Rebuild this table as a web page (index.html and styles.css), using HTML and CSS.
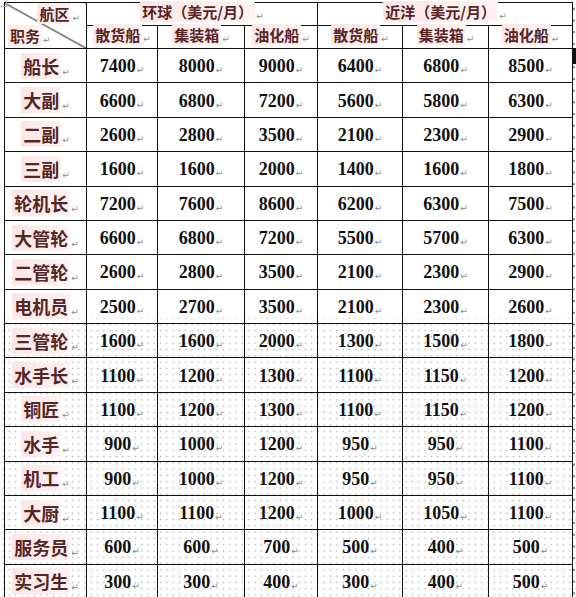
FILE: index.html
```html
<!DOCTYPE html>
<html lang="zh">
<head>
<meta charset="utf-8">
<link rel="stylesheet" href="styles.css">
</head>
<body>
<div class="page">
  <span class="crop"></span>
  <span class="cellmark"></span>
  <table class="wage">
    <colgroup>
      <col class="c0"><col class="c1"><col class="c2"><col class="c3"><col class="c4"><col class="c5"><col class="c6">
    </colgroup>
    <thead>
      <tr class="h1">
        <th rowspan="2" class="corner">
          <div class="corner-in">
            <span class="zone"><span class="hl">航区</span><span class="pm">↵</span></span>
            <span class="duty"><span class="hl">职务</span><span class="pm">↵</span></span>
          </div>
        </th>
        <th colspan="3" class="grp"><span class="hl">环球（美元/月）</span><span class="pm">↵</span></th>
        <th colspan="3" class="grp"><span class="hl">近洋（美元/月）</span><span class="pm">↵</span></th>
      </tr>
      <tr class="h2">
        <th><span class="hl">散货船</span><span class="pm">↵</span></th>
        <th><span class="hl">集装箱</span><span class="pm">↵</span></th>
        <th><span class="hl">油化船</span><span class="pm">↵</span></th>
        <th><span class="hl">散货船</span><span class="pm">↵</span></th>
        <th><span class="hl">集装箱</span><span class="pm">↵</span></th>
        <th><span class="hl">油化船</span><span class="pm">↵</span></th>
      </tr>
    </thead>
    <tbody>
      <tr><td class="name"><span class="hl">船长</span><span class="pm">↵</span></td><td>7400<span class="pm">↵</span></td><td>8000<span class="pm">↵</span></td><td>9000<span class="pm">↵</span></td><td>6400<span class="pm">↵</span></td><td>6800<span class="pm">↵</span></td><td>8500<span class="pm">↵</span></td></tr>
      <tr><td class="name"><span class="hl">大副</span><span class="pm">↵</span></td><td>6600<span class="pm">↵</span></td><td>6800<span class="pm">↵</span></td><td>7200<span class="pm">↵</span></td><td>5600<span class="pm">↵</span></td><td>5800<span class="pm">↵</span></td><td>6300<span class="pm">↵</span></td></tr>
      <tr><td class="name"><span class="hl">二副</span><span class="pm">↵</span></td><td>2600<span class="pm">↵</span></td><td>2800<span class="pm">↵</span></td><td>3500<span class="pm">↵</span></td><td>2100<span class="pm">↵</span></td><td>2300<span class="pm">↵</span></td><td>2900<span class="pm">↵</span></td></tr>
      <tr><td class="name"><span class="hl">三副</span><span class="pm">↵</span></td><td>1600<span class="pm">↵</span></td><td>1600<span class="pm">↵</span></td><td>2000<span class="pm">↵</span></td><td>1400<span class="pm">↵</span></td><td>1600<span class="pm">↵</span></td><td>1800<span class="pm">↵</span></td></tr>
      <tr><td class="name"><span class="hl">轮机长</span><span class="pm">↵</span></td><td>7200<span class="pm">↵</span></td><td>7600<span class="pm">↵</span></td><td>8600<span class="pm">↵</span></td><td>6200<span class="pm">↵</span></td><td>6300<span class="pm">↵</span></td><td>7500<span class="pm">↵</span></td></tr>
      <tr><td class="name"><span class="hl">大管轮</span><span class="pm">↵</span></td><td>6600<span class="pm">↵</span></td><td>6800<span class="pm">↵</span></td><td>7200<span class="pm">↵</span></td><td>5500<span class="pm">↵</span></td><td>5700<span class="pm">↵</span></td><td>6300<span class="pm">↵</span></td></tr>
      <tr><td class="name"><span class="hl">二管轮</span><span class="pm">↵</span></td><td>2600<span class="pm">↵</span></td><td>2800<span class="pm">↵</span></td><td>3500<span class="pm">↵</span></td><td>2100<span class="pm">↵</span></td><td>2300<span class="pm">↵</span></td><td>2900<span class="pm">↵</span></td></tr>
      <tr><td class="name"><span class="hl">电机员</span><span class="pm">↵</span></td><td>2500<span class="pm">↵</span></td><td>2700<span class="pm">↵</span></td><td>3500<span class="pm">↵</span></td><td>2100<span class="pm">↵</span></td><td>2300<span class="pm">↵</span></td><td>2600<span class="pm">↵</span></td></tr>
      <tr><td class="name"><span class="hl">三管轮</span><span class="pm">↵</span></td><td>1600<span class="pm">↵</span></td><td>1600<span class="pm">↵</span></td><td>2000<span class="pm">↵</span></td><td>1300<span class="pm">↵</span></td><td>1500<span class="pm">↵</span></td><td>1800<span class="pm">↵</span></td></tr>
      <tr><td class="name"><span class="hl">水手长</span><span class="pm">↵</span></td><td>1100<span class="pm">↵</span></td><td>1200<span class="pm">↵</span></td><td>1300<span class="pm">↵</span></td><td>1100<span class="pm">↵</span></td><td>1150<span class="pm">↵</span></td><td>1200<span class="pm">↵</span></td></tr>
      <tr><td class="name"><span class="hl">铜匠</span><span class="pm">↵</span></td><td>1100<span class="pm">↵</span></td><td>1200<span class="pm">↵</span></td><td>1300<span class="pm">↵</span></td><td>1100<span class="pm">↵</span></td><td>1150<span class="pm">↵</span></td><td>1200<span class="pm">↵</span></td></tr>
      <tr><td class="name"><span class="hl">水手</span><span class="pm">↵</span></td><td>900<span class="pm">↵</span></td><td>1000<span class="pm">↵</span></td><td>1200<span class="pm">↵</span></td><td>950<span class="pm">↵</span></td><td>950<span class="pm">↵</span></td><td>1100<span class="pm">↵</span></td></tr>
      <tr><td class="name"><span class="hl">机工</span><span class="pm">↵</span></td><td>900<span class="pm">↵</span></td><td>1000<span class="pm">↵</span></td><td>1200<span class="pm">↵</span></td><td>950<span class="pm">↵</span></td><td>950<span class="pm">↵</span></td><td>1100<span class="pm">↵</span></td></tr>
      <tr><td class="name"><span class="hl">大厨</span><span class="pm">↵</span></td><td>1100<span class="pm">↵</span></td><td>1100<span class="pm">↵</span></td><td>1200<span class="pm">↵</span></td><td>1000<span class="pm">↵</span></td><td>1050<span class="pm">↵</span></td><td>1100<span class="pm">↵</span></td></tr>
      <tr><td class="name"><span class="hl">服务员</span><span class="pm">↵</span></td><td>600<span class="pm">↵</span></td><td>600<span class="pm">↵</span></td><td>700<span class="pm">↵</span></td><td>500<span class="pm">↵</span></td><td>400<span class="pm">↵</span></td><td>500<span class="pm">↵</span></td></tr>
      <tr><td class="name"><span class="hl">实习生</span><span class="pm">↵</span></td><td>300<span class="pm">↵</span></td><td>300<span class="pm">↵</span></td><td>400<span class="pm">↵</span></td><td>300<span class="pm">↵</span></td><td>400<span class="pm">↵</span></td><td>500<span class="pm">↵</span></td></tr>
    </tbody>
  </table>
</div>
</body>
</html>
```
FILE: styles.css
```css
html, body {
  margin: 0;
  padding: 0;
  background: #fff;
}
.page {
  position: relative;
  width: 576px;
  height: 597px;
  overflow: hidden;
  padding: 2px 0 0 4px;
  box-sizing: border-box;
  background:
    radial-gradient(circle, #8a8a8a 0.9px, transparent 1.3px) 572px 3px / 4px 11.7px repeat-y,
    linear-gradient(#fff, #fff) 0 0 / 100% 318px no-repeat,
    radial-gradient(circle, #a8a8a8 0.6px, transparent 1px) 0 0 / 6.3px 6.3px;
}
.crop {
  position: absolute;
  left: 0;
  top: 0;
  width: 6px;
  height: 6px;
  border-right: 1px solid #bbb;
  border-bottom: 1px solid #bbb;
}
.cellmark {
  position: absolute;
  left: 573px;
  top: 48px;
  width: 3px;
  height: 16px;
  background: #111;
}
.wage {
  border-collapse: collapse;
  table-layout: fixed;
  width: 568px;
  font-family: "Liberation Serif", "Noto Sans CJK SC", serif;
}
.c0 { width: 82px; }
.c1 { width: 71px; }
.c2 { width: 87px; }
.c3 { width: 73px; }
.c4 { width: 85px; }
.c5 { width: 86px; }
.c6 { width: 84px; }
.wage th, .wage td {
  border: 1px solid #111;
  padding: 0;
  text-align: center;
  vertical-align: middle;
  white-space: nowrap;
}
.wage th {
  font-family: "Noto Sans CJK SC", sans-serif;
  font-size: 15px;
  font-weight: 700;
  color: #5a2424;
  line-height: 18px;
}
.h1 th { height: 20px; }
.h2 th { height: 20px; }
.grp { text-align: center; }
.corner {
  background: linear-gradient(to top right, transparent calc(50% - 0.7px), #222 calc(50% - 0.3px), #222 calc(50% + 0.3px), transparent calc(50% + 0.7px));
}
.corner-in {
  display: flex;
  flex-direction: column;
  height: 41px;
  justify-content: space-between;
}
.zone {
  align-self: flex-end;
  padding-right: 6px;
}
.duty {
  align-self: flex-start;
  padding-left: 3px;
}
.wage tbody tr { height: 34.375px; }
.wage td {
  font-size: 18px;
  font-weight: 700;
  color: #111;
  padding-top: 2px;
}
.wage td.name {
  font-family: "Noto Sans CJK SC", sans-serif;
  font-size: 18px;
  font-weight: 700;
  color: #552626;
  padding-top: 0;
}
.hl {
  background: linear-gradient(to right, #fce6e6, #fef2f2);
  padding: 0 2px;
}
.pm {
  font-family: "DejaVu Sans", sans-serif;
  font-size: 9px;
  font-weight: 400;
  color: #888;
  margin-left: 1px;
  vertical-align: -1px;
}
```
